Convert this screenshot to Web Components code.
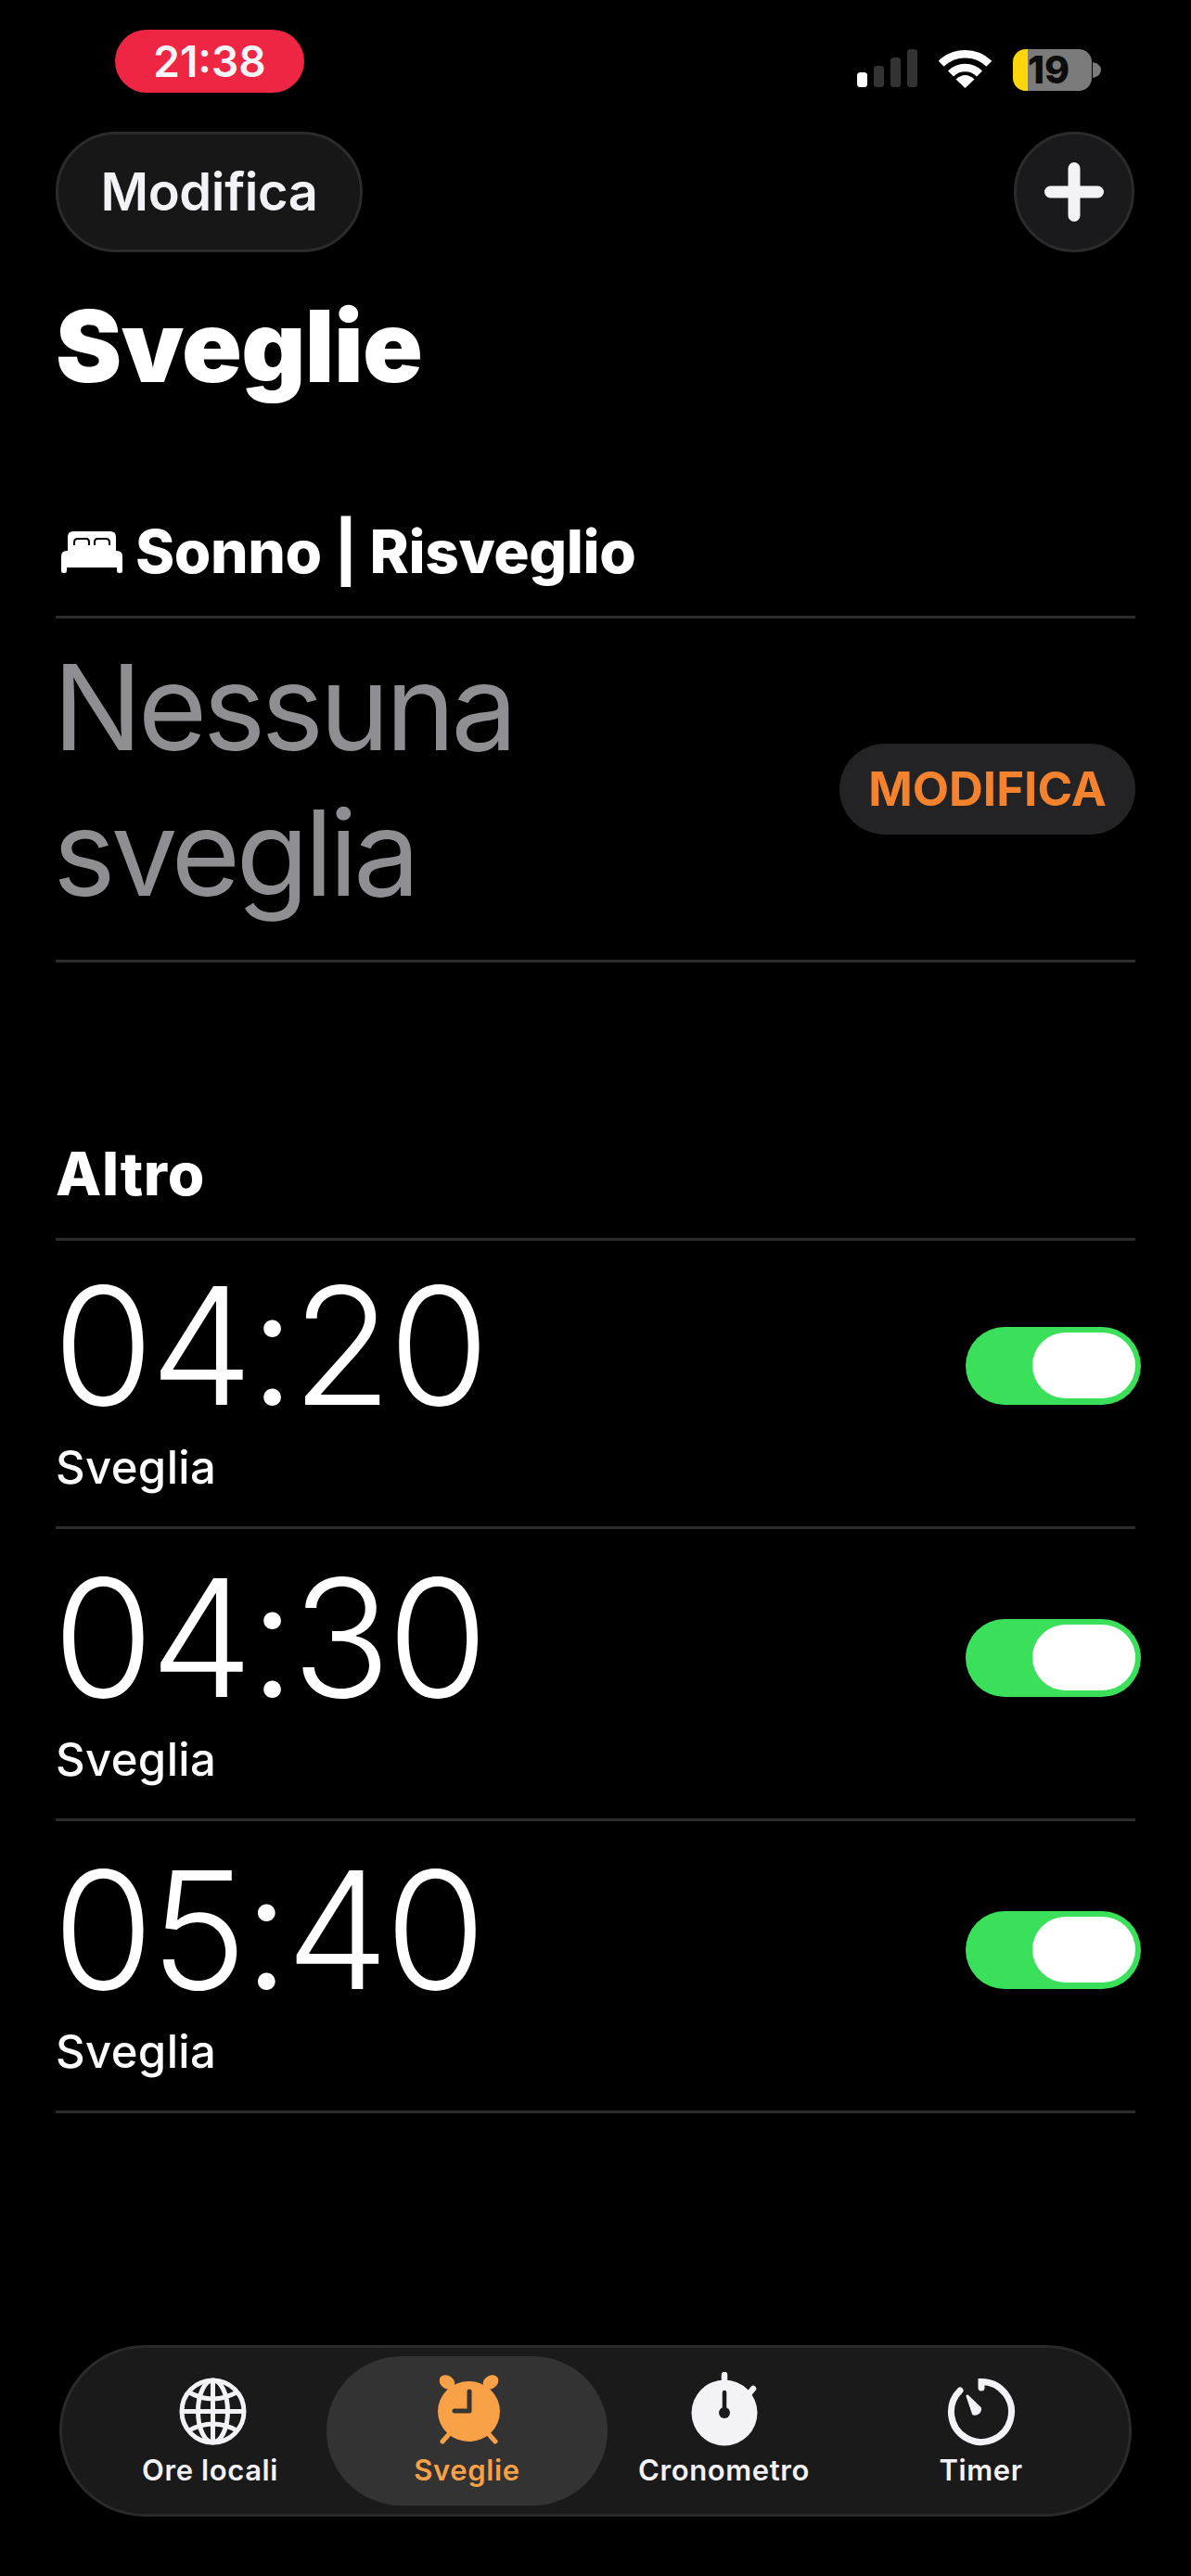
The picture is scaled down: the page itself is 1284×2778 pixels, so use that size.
<!DOCTYPE html>
<html lang="it">
<head>
<meta charset="utf-8">
<title>Sveglie</title>
<style>
    html, body {
        margin: 0;
        background: #000;
        color: #fff;
        font-family: Inter, "Liberation Sans", sans-serif;
    }
    body {
        min-height: 100vh;
    }
</style>
</head>
<body>
<clock-app>
    <status-bar slot="status" time="21:38" battery="19"></status-bar>
    <clock-toolbar slot="toolbar"></clock-toolbar>
    <page-title slot="title">Sveglie</page-title>

    <section-head slot="sleep-head" first>
        <svg slot="icon" width="66" height="45" viewBox="0 0 66 45">
            <path fill="#fff" d="M7 21V6q0-6 6-6h40q6 0 6 6v15h1q6 0 6 6v16q0 2-2.500 2h-1q-2.500 0-2.500-2v-4H6v4q0 2-2.500 2h-1Q0 45 0 43V27q0-6 6-6z"/>
            <path fill="none" stroke="#000" stroke-width="2" d="M14 15v-3q0-4 4-4h9q3 0 3 4v3M36 15v-3q0-4 3-4h9q4 0 4 4v3"/>
        </svg>
        Sonno | Risveglio
    </section-head>
    <sleep-row slot="sleep-row" action="MODIFICA">Nessuna sveglia</sleep-row>

    <section-head slot="other-head">Altro</section-head>
    <alarm-row slot="alarms" time="04:20" first>Sveglia</alarm-row>
    <alarm-row slot="alarms" time="04:30">Sveglia</alarm-row>
    <alarm-row slot="alarms" time="05:40">Sveglia</alarm-row>

    <tab-bar slot="tabs">
        <tab-item label="Ore locali">
            <svg width="80" height="80" viewBox="0 0 80 80" fill="none" stroke="#f2f2f7" stroke-width="5">
                <circle cx="42.500" cy="42.500" r="33.500"/>
                <ellipse cx="42.500" cy="42.500" rx="16" ry="33.500"/>
                <path d="M42.500 9v67M9 42.500h67M16 21.500q26.500 15 53 0M16 63.500q26.500-15 53 0"/>
            </svg>
        </tab-item>
        <tab-item label="Sveglie" active>
            <svg width="80" height="80" viewBox="0 0 80 80">
                <ellipse cx="18" cy="11" rx="9" ry="7" fill="#f9a147" transform="rotate(35 18 11)"/>
                <ellipse cx="65" cy="11" rx="9" ry="7" fill="#f9a147" transform="rotate(-35 65 11)"/>
                <path d="M21 66l-8 9M62 66l8 9" stroke="#f9a147" stroke-width="5" stroke-linecap="round"/>
                <ellipse cx="41.500" cy="42.500" rx="33.500" ry="32.500" fill="#f9a147"/>
                <path d="M42 21v21H26" fill="none" stroke="#383431" stroke-width="5" stroke-linecap="round" stroke-linejoin="round"/>
            </svg>
        </tab-item>
        <tab-item label="Cronometro">
            <svg width="80" height="80" viewBox="0 0 80 80">
                <path d="M40 3v10M66 24l5-6" stroke="#f2f2f7" stroke-width="6.500" stroke-linecap="round"/>
                <circle cx="40" cy="44" r="35.500" fill="#f2f2f7"/>
                <path d="M40 22v21" stroke="#1a1a1c" stroke-width="4.500" stroke-linecap="round"/>
                <circle cx="40" cy="44" r="6" fill="#1a1a1c"/>
            </svg>
        </tab-item>
        <tab-item label="Timer">
            <svg width="80" height="80" viewBox="0 0 80 80" fill="none">
                <path d="M40 17V10.500A32.500 32.500 0 1 1 17 20" stroke="#f2f2f7" stroke-width="7" stroke-linecap="round"/>
                <path d="M25 26l13.500 13a5.500 5.500 0 0 1-7 6z" fill="#f2f2f7" stroke="#f2f2f7" stroke-width="3" stroke-linejoin="round"/>
            </svg>
        </tab-item>
    </tab-bar>
</clock-app>

<script>
window.customElements.define('clock-app', class extends HTMLElement {
    constructor() {
        super();

        this.attachShadow({ mode: 'open' });
        this.shadowRoot.innerHTML = `
            <style>
                :host {
                    display: block;
                }
                main {
                    display: flex;
                    flex-direction: column;
                }
            </style>
            <main>
                <slot name="status"></slot>
                <slot name="toolbar"></slot>
                <slot name="title"></slot>
                <slot name="sleep-head"></slot>
                <slot name="sleep-row"></slot>
                <slot name="other-head"></slot>
                <slot name="alarms"></slot>
                <slot name="tabs"></slot>
            </main>
        `;
    }
});

window.customElements.define('status-bar', class extends HTMLElement {
    constructor() {
        super();

        const time = this.getAttribute('time');
        const battery = this.getAttribute('battery');
        this.attachShadow({ mode: 'open' });
        this.shadowRoot.innerHTML = `
            <style>
                :host {
                    display: flex;
                    justify-content: space-between;
                    box-sizing: border-box;
                    height: 142px;
                    padding: 32px 97px 0 124px;
                }
                .time {
                    width: 204px;
                    height: 68px;
                    border-radius: 34px;
                    background: #ee2644;
                    color: #f7f7f9;
                    font-size: 46px;
                    font-weight: 600;
                    line-height: 68px;
                    text-align: center;
                }
                .icons {
                    display: flex;
                    align-items: flex-start;
                    gap: 23px;
                    padding-top: 21px;
                }
                .battery {
                    display: flex;
                    align-items: center;
                }
                .cell {
                    box-sizing: border-box;
                    width: 85px;
                    height: 45px;
                    border-radius: 14px;
                    background: linear-gradient(90deg, #ffd60a 16px, #7b7b7b 16px);
                    color: #0c0c0c;
                    font-size: 41px;
                    font-weight: 800;
                    line-height: 45px;
                    padding-left: 16px;
                }
            </style>
            <div class="time">${time}</div>
            <div class="icons">
                <svg width="65" height="42" viewBox="0 0 65 42">
                    <rect x="0" y="25" width="11" height="16" rx="3.500" fill="#fff"/>
                    <rect x="18" y="18" width="11" height="23" rx="3.500" fill="#333"/>
                    <rect x="36" y="9" width="11" height="32" rx="3.500" fill="#333"/>
                    <rect x="54" y="0" width="11" height="41" rx="3.500" fill="#333"/>
                </svg>
                <svg width="57" height="42" viewBox="0 0 57 42" fill="none" stroke="#fff" stroke-width="8.500">
                    <path d="M2.700 15.700A37 37 0 0 1 54.300 15.700"/>
                    <path d="M13 26.500A22 22 0 0 1 44 26.500"/>
                    <path d="M18.500 32.500L28.500 42L38.500 32.500Q28.500 23.500 18.500 32.500z" fill="#fff" stroke="none"/>
                </svg>
                <div class="battery">
                    <div class="cell">${battery}</div>
                    <svg width="9" height="17" viewBox="0 0 9 17" style="margin-left:1px">
                        <path d="M0 0q9 2 9 8.500T0 17z" fill="#7b7b7b"/>
                    </svg>
                </div>
            </div>
        `;
    }
});

window.customElements.define('clock-toolbar', class extends HTMLElement {
    constructor() {
        super();

        this.attachShadow({ mode: 'open' });
        this.shadowRoot.innerHTML = `
            <style>
                :host {
                    display: flex;
                    justify-content: space-between;
                    padding: 0 60px;
                    color: #f2f2f7;
                }
                .btn {
                    display: flex;
                    align-items: center;
                    justify-content: center;
                    box-sizing: border-box;
                    height: 130px;
                    border: 3px solid #2b2b2c;
                    border-radius: 65px;
                    background: #171718;
                }
                .edit {
                    width: 331px;
                    font-size: 56px;
                    font-weight: 600;
                    letter-spacing: -.4px;
                }
                .add {
                    width: 130px;
                    margin-right: 1px;
                    background: #1a1a1c;
                }
            </style>
            <div class="btn edit">Modifica</div>
            <div class="btn add">
                <svg width="64" height="64" viewBox="0 0 64 64">
                    <path d="M32 6.500v51M6.500 32h51" stroke="#f2f2f7" stroke-width="13" stroke-linecap="round"/>
                </svg>
            </div>
        `;
    }
});

window.customElements.define('page-title', class extends HTMLElement {
    constructor() {
        super();

        this.attachShadow({ mode: 'open' });
        this.shadowRoot.innerHTML = `
            <style>
                :host {
                    display: block;
                    margin: 36px 60px 0;
                    font-size: 107px;
                    font-weight: 900;
                    letter-spacing: -.6px;
                    line-height: 130px;
                }
            </style>
            <slot></slot>
        `;
    }
});

window.customElements.define('section-head', class extends HTMLElement {
    constructor() {
        super();

        this.attachShadow({ mode: 'open' });
        this.shadowRoot.innerHTML = `
            <style>
                :host {
                    display: flex;
                    align-items: center;
                    gap: 14px;
                    margin: 188px 60px 0;
                    padding-bottom: 29px;
                    border-bottom: 3px solid #2c2c2e;
                    font-size: 64px;
                    font-weight: 800;
                    letter-spacing: .7px;
                    line-height: 80px;
                }
                :host([first]) {
                    margin-top: 117px;
                    letter-spacing: -.4px;
                }
                ::slotted(svg) {
                    margin-left: 6px;
                }
            </style>
            <slot name="icon"></slot>
            <slot></slot>
        `;
    }
});

window.customElements.define('sleep-row', class extends HTMLElement {
    constructor() {
        super();

        const action = this.getAttribute('action');
        this.attachShadow({ mode: 'open' });
        this.shadowRoot.innerHTML = `
            <style>
                :host {
                    display: flex;
                    align-items: center;
                    justify-content: space-between;
                    margin: 0 60px;
                    padding: 17px 0 37px;
                    border-bottom: 3px solid #2c2c2e;
                }
                .text {
                    max-width: 560px;
                    margin-left: -3px;
                    color: #8e8e93;
                    font-size: 128px;
                    font-weight: 400;
                    letter-spacing: -4.700px;
                    line-height: 157px;
                }
                .action {
                    box-sizing: border-box;
                    width: 319px;
                    height: 98px;
                    margin-top: 20px;
                    border-radius: 49px;
                    background: #232326;
                    color: #f5822c;
                    font-size: 51px;
                    font-weight: 700;
                    line-height: 98px;
                    text-align: center;
                }
            </style>
            <div class="text"><slot></slot></div>
            <div class="action">${action}</div>
        `;
    }
});

window.customElements.define('alarm-row', class extends HTMLElement {
    constructor() {
        super();

        const time = this.getAttribute('time');
        this.attachShadow({ mode: 'open' });
        this.shadowRoot.innerHTML = `
            <style>
                :host {
                    display: flex;
                    align-items: flex-start;
                    justify-content: space-between;
                    margin: 0 60px;
                    padding: 22px 0 33px;
                    border-bottom: 3px solid #2c2c2e;
                }
                :host([first]) {
                    padding-top: 18px;
                }
                .time {
                    margin-left: -3px;
                    font-size: 176px;
                    font-weight: 300;
                    letter-spacing: -3.800px;
                    line-height: 190px;
                }
                .label {
                    margin-top: 7px;
                    font-size: 49px;
                    font-weight: 500;
                    letter-spacing: .4px;
                    line-height: 60px;
                }
                on-toggle {
                    margin: 75px -6px 0 0;
                }
            </style>
            <div>
                <div class="time">${time}</div>
                <div class="label"><slot></slot></div>
            </div>
            <on-toggle></on-toggle>
        `;
    }
});

window.customElements.define('on-toggle', class extends HTMLElement {
    constructor() {
        super();

        this.attachShadow({ mode: 'open' });
        this.shadowRoot.innerHTML = `
            <style>
                :host {
                    display: flex;
                    justify-content: flex-end;
                    box-sizing: border-box;
                    width: 189px;
                    height: 84px;
                    padding: 6px;
                    border-radius: 42px;
                    background: #3ae059;
                }
                div {
                    width: 111px;
                    height: 71px;
                    border-radius: 36px;
                    background: #fff;
                }
            </style>
            <div></div>
        `;
    }
});

window.customElements.define('tab-bar', class extends HTMLElement {
    constructor() {
        super();

        this.attachShadow({ mode: 'open' });
        this.shadowRoot.innerHTML = `
            <style>
                :host {
                    display: grid;
                    grid-template-columns: repeat(4, 277px);
                    justify-content: center;
                    box-sizing: border-box;
                    height: 185px;
                    margin: 250px 64px 0;
                    padding: 9px 0;
                    border: 3px solid #2a2a2b;
                    border-radius: 93px;
                    background: #1a1a1b;
                }
            </style>
            <slot></slot>
        `;
    }
});

window.customElements.define('tab-item', class extends HTMLElement {
    constructor() {
        super();

        const label = this.getAttribute('label');
        this.attachShadow({ mode: 'open' });
        this.shadowRoot.innerHTML = `
            <style>
                :host {
                    display: flex;
                    flex-direction: column;
                    align-items: center;
                    box-sizing: border-box;
                    height: 161px;
                    padding-top: 17px;
                    color: #f2f2f7;
                    font-size: 31px;
                    font-weight: 600;
                    letter-spacing: .6px;
                    line-height: 40px;
                }
                :host([active]) {
                    margin: 0 -13px;
                    border-radius: 81px;
                    background: #333334;
                    color: #f9a147;
                }
                ::slotted(svg) {
                    display: block;
                }
                span {
                    margin-top: 6px;
                }
            </style>
            <slot></slot>
            <span>${label}</span>
        `;
    }
});
</script>
</body>
</html>
